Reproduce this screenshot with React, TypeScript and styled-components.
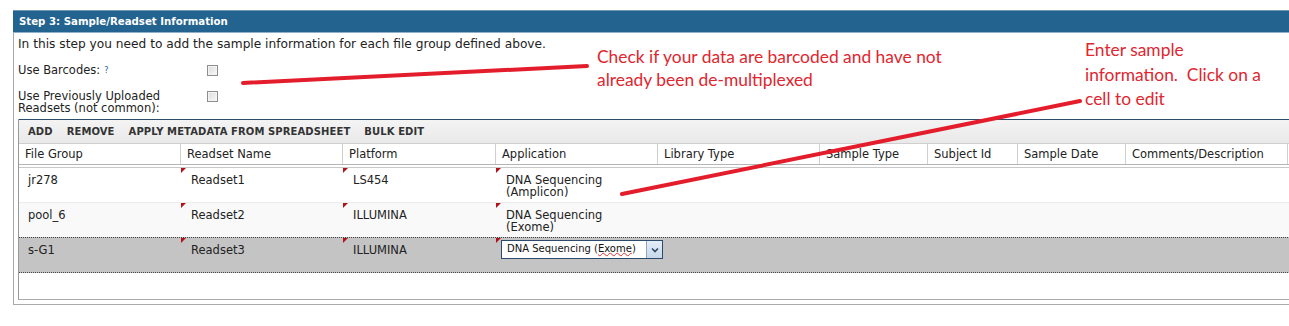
import React from 'react';
import styled, { createGlobalStyle } from 'styled-components';

const GlobalStyle = createGlobalStyle`
  body {
    margin: 0;
    background: #fff;
    overflow: hidden;
    font-family: "DejaVu Sans", Verdana, sans-serif;
    color: #222;
  }
`;

const COLUMNS = [
  { title: 'File Group', width: 162 },
  { title: 'Readset Name', width: 162 },
  { title: 'Platform', width: 153 },
  { title: 'Application', width: 162 },
  { title: 'Library Type', width: 162 },
  { title: 'Sample Type', width: 108 },
  { title: 'Subject Id', width: 90 },
  { title: 'Sample Date', width: 108 },
  { title: 'Comments/Description', width: 162 },
];

const ROWS = [
  { group: 'jr278', name: 'Readset1', platform: 'LS454', application: 'DNA Sequencing (Amplicon)' },
  { group: 'pool_6', name: 'Readset2', platform: 'ILLUMINA', application: 'DNA Sequencing (Exome)' },
  { group: 's-G1', name: 'Readset3', platform: 'ILLUMINA', application: 'DNA Sequencing (Exome)', editing: true },
];

const Page = styled.div`
  position: relative;
  width: 1289px;
  height: 326px;
  padding: 10px 0 0 13px;
  box-sizing: border-box;
`;

const Panel = styled.div`
  width: 1300px;
  border: 1px solid #aaa;
  border-top: none;
  padding-bottom: 4px;
`;

const PanelHeader = styled.div`
  background: #23638f;
  border-top: 1px solid #6f97b6;
  border-bottom: 1px solid #8fb0c8;
  height: 21px;
  line-height: 21px;
  padding-left: 6px;
  color: #fff;
  font-weight: bold;
  font-size: 10.2px;
  margin-left: -1px;
`;

const Body = styled.div`
  padding-left: 4px;
`;

const Intro = styled.p`
  margin: 4px 0 0;
  font-size: 12.2px;
  line-height: 14px;
`;

const FormRow = styled.div<{ $top: number }>`
  display: grid;
  grid-template-columns: 189px 11px;
  align-items: start;
  margin-top: ${(p) => p.$top}px;
`;

const FieldLabel = styled.label`
  font-size: 11.5px;
  line-height: 12px;
  width: 150px;
`;

const Help = styled.sup`
  font-size: 8px;
  color: #2d5f8f;
  vertical-align: 1px;
  margin-left: 4px;
`;

const Checkbox = styled.span`
  display: block;
  width: 11px;
  height: 11px;
  margin-top: 1px;
  box-sizing: border-box;
  border: 1px solid #8e8e8e;
  background: linear-gradient(135deg, #dcdcdc, #f8f8f8);
  box-shadow: inset 0 0 0 1px #f4f4f4;
`;

const Grid = styled.div`
  margin-top: 5px;
  border-left: 1px solid #999;
  border-bottom: 1px solid #aaa;
`;

const Toolbar = styled.div`
  display: flex;
  height: 23px;
  align-items: center;
  border-top: 1px solid #2b4d6c;
  background: linear-gradient(#f4f4f4, #e9e9e9);
  padding-left: 4px;
`;

const ToolButton = styled.span`
  font-size: 10px;
  font-weight: bold;
  color: #333;
  padding: 0 6px 0 5px;
  margin-right: 3px;
  letter-spacing: 0.1px;
`;

const HeaderRow = styled.div`
  display: flex;
  height: 20px;
  border-top: 1px solid #cfcfcf;
  border-bottom: 1px solid #b5b5b5;
  background: #fff;
`;

const HeaderCell = styled.div<{ $w: number }>`
  width: ${(p) => p.$w}px;
  flex: none;
  box-sizing: border-box;
  padding-left: 6px;
  font-size: 11.5px;
  line-height: 20px;
  border-right: 1px solid #d0d0d0;
  white-space: nowrap;
  overflow: hidden;
`;

const Rows = styled.div`
  margin-top: 2px;
  border-top: 1px solid #c8c8c8;
  height: 131px;
`;

const Row = styled.div<{ $alt?: boolean; $editing?: boolean }>`
  display: flex;
  height: 35px;
  box-sizing: border-box;
  background: ${(p) => (p.$editing ? '#c4c4c4' : p.$alt ? '#f9f9f9' : '#fff')};
  border-bottom: 1px solid #ececec;
  ${(p) =>
    p.$editing &&
    `border-top: 1px dotted #444; border-bottom: 1px dotted #444; margin-top: -1px; height: 36px;`}
`;

const Cell = styled.div<{ $w: number; $dirty?: boolean }>`
  position: relative;
  width: ${(p) => p.$w}px;
  flex: none;
  box-sizing: border-box;
  padding: 6px 8px 0 ${(p) => (p.$dirty ? 10 : 9)}px;
  font-size: 11.5px;
  line-height: 12px;
  ${(p) =>
    p.$dirty &&
    `&::before {
      content: '';
      position: absolute;
      left: 0;
      top: 0;
      border-top: 5px solid #b3121b;
      border-right: 5px solid transparent;
    }`}
`;

const AppText = styled.div`
  width: 110px;
`;

const Select = styled.div`
  display: flex;
  width: 162px;
  height: 19px;
  margin: -4px 0 0 -5px;
  box-sizing: border-box;
  border: 1px solid #2c4a6b;
  background: #fff;
`;

const SelectValue = styled.span`
  flex: 1;
  padding-left: 5px;
  font-size: 10px;
  line-height: 16px;
  color: #111;
  white-space: nowrap;
`;

const Misspelled = styled.span`
  text-decoration: underline wavy #e03030;
  text-decoration-thickness: 1px;
  text-underline-offset: 0;
  text-decoration-skip-ink: none;
`;

const SelectButton = styled.span`
  width: 15px;
  display: flex;
  align-items: center;
  justify-content: center;
  border-left: 1px solid #8ea6c2;
  background: linear-gradient(#e4edf7, #c8d8ea);
`;

const Annotations = styled.svg`
  position: absolute;
  left: 0;
  top: 0;
  pointer-events: none;
`;

const Callout = styled.div<{ $x: number; $y: number; $lh: number }>`
  position: absolute;
  left: ${(p) => p.$x}px;
  top: ${(p) => p.$y}px;
  font-family: Lato, "Open Sans", sans-serif;
  font-size: 17.4px;
  line-height: ${(p) => p.$lh}px;
  color: #e0262f;
  white-space: pre;
`;

const Chevron = () => (
  <svg width="8" height="6" viewBox="0 0 8 6">
    <path d="M1 1.5 L4 4.5 L7 1.5" fill="none" stroke="#2c4a6b" strokeWidth="1.6" />
  </svg>
);

const App: React.FC = () => {
  return (
    <Page>
      <GlobalStyle />
      <Panel>
        <PanelHeader>Step 3: Sample/Readset Information</PanelHeader>
        <Body>
          <Intro>In this step you need to add the sample information for each file group defined above.</Intro>
          <FormRow $top={13}>
            <FieldLabel>
              Use Barcodes:<Help>?</Help>
            </FieldLabel>
            <Checkbox />
          </FormRow>
          <FormRow $top={13}>
            <FieldLabel>Use Previously Uploaded Readsets (not common):</FieldLabel>
            <Checkbox />
          </FormRow>
          <Grid>
            <Toolbar>
              <ToolButton>ADD</ToolButton>
              <ToolButton>REMOVE</ToolButton>
              <ToolButton>APPLY METADATA FROM SPREADSHEET</ToolButton>
              <ToolButton>BULK EDIT</ToolButton>
            </Toolbar>
            <HeaderRow>
              {COLUMNS.map((c) => (
                <HeaderCell key={c.title} $w={c.width}>
                  {c.title}
                </HeaderCell>
              ))}
            </HeaderRow>
            <Rows>
              {ROWS.map((r, i) => (
                <Row key={r.group} $alt={i % 2 === 1} $editing={r.editing}>
                  <Cell $w={COLUMNS[0].width}>{r.group}</Cell>
                  <Cell $w={COLUMNS[1].width} $dirty>{r.name}</Cell>
                  <Cell $w={COLUMNS[2].width} $dirty>{r.platform}</Cell>
                  <Cell $w={COLUMNS[3].width} $dirty>
                    {r.editing ? (
                      <Select>
                        <SelectValue>
                          DNA Sequencing (<Misspelled>Exome</Misspelled>)
                        </SelectValue>
                        <SelectButton>
                          <Chevron />
                        </SelectButton>
                      </Select>
                    ) : (
                      <AppText>{r.application}</AppText>
                    )}
                  </Cell>
                  {COLUMNS.slice(4).map((c) => (
                    <Cell key={c.title} $w={c.width} />
                  ))}
                </Row>
              ))}
            </Rows>
          </Grid>
        </Body>
      </Panel>

      <Annotations width="1289" height="326" viewBox="0 0 1289 326">
        <path d="M243 83 L587 66" stroke="#e31d2b" strokeWidth="4" strokeLinecap="round" fill="none" />
        <path d="M622 194 L1080 101" stroke="#e31d2b" strokeWidth="4" strokeLinecap="round" fill="none" />
      </Annotations>
      <Callout $x={597} $y={45} $lh={23}>
        {'Check if your data are barcoded and have not\nalready been de-multiplexed'}
      </Callout>
      <Callout $x={1085} $y={38} $lh={24.5}>
        {'Enter sample\ninformation.  Click on a\ncell to edit'}
      </Callout>
    </Page>
  );
};

export default App;
